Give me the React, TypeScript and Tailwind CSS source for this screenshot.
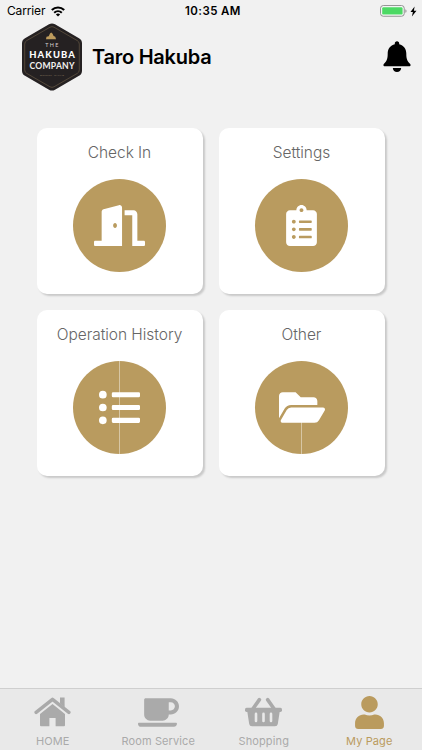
import type { ReactNode } from "react";
import {
  FaClipboardList,
  FaCoffee,
  FaDoorOpen,
  FaFolderOpen,
  FaListUl,
  FaUser,
} from "react-icons/fa";

const StatusBar = () => {
  return (
    <div className="grid h-[22px] grid-cols-3 items-center pr-[5px] pl-[7px] text-[12px] text-black">
      <div className="flex items-center gap-[6px]">
        <span className="tracking-[-0.15px]">Carrier</span>
        <svg width="14" height="11" viewBox="0 0 14 11">
          <g fill="none" stroke="#000" strokeWidth="2.1">
            <path d="M0.8 4.1C4.3 0.7 9.7 0.7 13.2 4.1" />
            <path d="M3.2 6.7c2.2-2 5.4-2 7.6 0" />
          </g>
          <path d="M4.9 8.4c1.2-1.1 3-1.1 4.2 0L7 10.6z" />
        </svg>
      </div>
      <span className="pt-[2px] pl-[2px] text-center text-[11.5px] font-semibold tracking-[0.4px] whitespace-nowrap">
        10:35 AM
      </span>
      <div className="flex items-center justify-end gap-[3px]">
        <svg className="ml-[2px]" width="28" height="12" viewBox="0 0 28 12">
          <rect x="1.6" y="0.6" width="23.6" height="10.6" rx="2.6" fill="#fff" stroke="#8c8c8c" />
          <rect x="3.2" y="2.2" width="20.4" height="7.4" rx="1.2" fill="#4cd964" />
          <path d="M26.4 4.2c1.5.5 1.5 3.1 0 3.6z" fill="#8c8c8c" />
        </svg>
        <svg width="7" height="11" viewBox="0 0 7 11">
          <path d="M4.6 0.5L0.5 6.1h2.4L1.9 10.5 6.5 4.7H3.9z" />
        </svg>
      </div>
    </div>
  );
};

const Logo = () => {
  return (
    <svg
      className="font-[Lato,sans-serif]"
      width="60"
      height="68"
      viewBox="0 0 60 68"
      textAnchor="middle"
    >
      <path
        d="M27 1.3q3-1.7 6 0l24 13.9q3 1.7 3 5.1v27.4q0 3.4-3 5.1L33 66.7q-3 1.7-6 0L3 52.8q-3-1.7-3-5.1V20.3q0-3.4 3-5.1z"
        fill="#252122"
      />
      <path
        d="M28 4.2q2-1.1 4 0l23.3 13.4q2 1.2 2 3.5v25.8q0 2.3-2 3.5L32 63.8q-2 1.1-4 0L4.7 50.4q-2-1.2-2-3.5V21.1q0-2.3 2-3.5z"
        fill="none"
        stroke="#665844"
        strokeWidth="0.7"
      />
      <path d="M24 16.2l.5-2.4 2.2-.6 1.3-2.6 1.2-1 1.4 1.2 1 2.2 1.7.7.7 2.5z" fill="#bd9b5d" />
      <text x="29.8" y="24.2" fontSize="5.4" fill="#d6d2cf" textLength="13">
        THE
      </text>
      <text x="30" y="35" fontSize="9.4" fontWeight="900" fill="#fff" textLength="45.5">
        HAKUBA
      </text>
      <text x="30" y="45.8" fontSize="8.6" fontWeight="700" fill="#f3f2f1" textLength="45">
        COMPANY
      </text>
      <text x="30" y="53" fontSize="2.6" fill="#80705a" textLength="24">
        DISTRICT · ONLINE
      </text>
    </svg>
  );
};

const Bell = () => {
  return (
    <svg width="28" height="32" viewBox="0 0 28 32">
      <path d="M14 0.2c-1.4 0-2.2 1-2.2 2.2v.8C7.4 4.2 4.7 7.9 4.7 12.6c0 5.2-.9 7.7-3.7 10.2-1.1 1.1-.7 2.5 1.1 2.5h23.8c1.8 0 2.2-1.4 1.1-2.5-2.8-2.5-3.7-5-3.7-10.2 0-4.7-2.7-8.4-7.1-9.4v-.8c0-1.2-.8-2.2-2.2-2.2z" />
      <path d="M9.8 27.1h8.4c-.2 2.5-1.9 4-4.2 4s-4-1.5-4.2-4z" />
    </svg>
  );
};

const HomeIcon = () => {
  return (
    <svg width="37" height="30" viewBox="0 0 37 30" fill="currentColor">
      <path d="M26 .6h4.6v9.6L26 6.4z" />
      <path
        d="M2.1 15.4L18.5 2.3l16.4 13.1"
        fill="none"
        stroke="currentColor"
        strokeWidth="3.4"
        strokeLinecap="round"
        strokeLinejoin="round"
      />
      <path d="M18.5 7.1L31 17.1v11.2q0 1-1 1h-8.4v-8.2h-6.2v8.2H7q-1 0-1-1V17.1z" />
    </svg>
  );
};

const BasketIcon = () => {
  return (
    <svg width="37" height="30" viewBox="0 0 37 30" fill="currentColor">
      <g stroke="currentColor" strokeWidth="3.6" strokeLinecap="round">
        <path d="M7.8 12L14.4 2.6" />
        <path d="M29.2 12L22.6 2.6" />
      </g>
      <rect y="10.7" width="37" height="4.2" rx="1.6" />
      <path
        fillRule="evenodd"
        d="M2.2 14h32.6l-2 12.9q-.4 2.4-2.8 2.4H7q-2.4 0-2.8-2.4zM11 15.6q-1.3 0-1.3 1.3v7q0 1.3 1.3 1.3t1.3-1.3v-7q0-1.3-1.3-1.3zM18.5 15.6q-1.3 0-1.3 1.3v7q0 1.3 1.3 1.3t1.3-1.3v-7q0-1.3-1.3-1.3zM26 15.6q-1.3 0-1.3 1.3v7q0 1.3 1.3 1.3t1.3-1.3v-7q0-1.3-1.3-1.3z"
      />
    </svg>
  );
};

const MenuCard = ({ title, children }: { title: string; children: ReactNode }) => {
  return (
    <div className="flex h-[166px] flex-col items-center rounded-[10px] bg-white pt-[13px] shadow-[2px_2px_2px_rgba(0,0,0,0.17)]">
      <span className="h-[23px] text-[15.5px] leading-[23px] font-light tracking-[-0.05px] whitespace-nowrap text-[#666]">
        {title}
      </span>
      <div className="relative mt-[15px] flex size-[93px] items-center justify-center rounded-full bg-[#b99b5f] text-white">
        {children}
      </div>
    </div>
  );
};

const Tab = ({
  label,
  active,
  children,
}: {
  label: string;
  active?: boolean;
  children: ReactNode;
}) => {
  return (
    <div
      className={`flex flex-1 flex-col items-center pt-[6px] ${
        active ? "text-[#ba9b5e]" : "text-[#aaa]"
      }`}
    >
      <div className="flex h-[34px] items-center">{children}</div>
      <span className="mt-[4px] text-[11px] leading-[16px] tracking-[0.12px] whitespace-nowrap">
        {label}
      </span>
    </div>
  );
};

const App = () => {
  return (
    <div className="flex h-[750px] w-[422px] flex-col overflow-hidden bg-[#f1f1f1] font-[Inter,sans-serif]">
      <StatusBar />
      <header className="flex h-[70px] items-center pr-[11px] pl-[22px]">
        <Logo />
        <h1 className="ml-[10px] flex-1 text-[20px] font-semibold tracking-[-0.25px] text-black">
          Taro Hakuba
        </h1>
        <Bell />
      </header>

      <main className="grid flex-1 grid-cols-[166px_166px] content-start gap-4 pt-[35.5px] pl-[36.5px]">
        <MenuCard title="Check In">
          <FaDoorOpen className="h-[41px] w-[51px]" />
        </MenuCard>
        <MenuCard title="Settings">
          <FaClipboardList className="h-[41px] w-[31px]" />
        </MenuCard>
        <MenuCard title="Operation History">
          <div className="absolute inset-y-0 left-[46px] w-px bg-[#d7c6a4]" />
          <FaListUl className="relative size-[41px]" />
        </MenuCard>
        <MenuCard title="Other">
          <div className="absolute bottom-0 left-[46px] h-[32px] w-px bg-[#d7c6a4]" />
          <FaFolderOpen className="relative h-[41px] w-[46px]" />
        </MenuCard>
      </main>

      <nav className="flex h-[62px] border-t border-[#cfcfcf] bg-[#e9e9e9]">
        <Tab label="HOME">
          <HomeIcon />
        </Tab>
        <Tab label="Room Service">
          <FaCoffee className="h-[33px] w-[41px]" />
        </Tab>
        <Tab label="Shopping">
          <BasketIcon />
        </Tab>
        <Tab label="My Page" active>
          <FaUser className="h-[33px] w-[29px]" />
        </Tab>
      </nav>
    </div>
  );
};

export default App;
